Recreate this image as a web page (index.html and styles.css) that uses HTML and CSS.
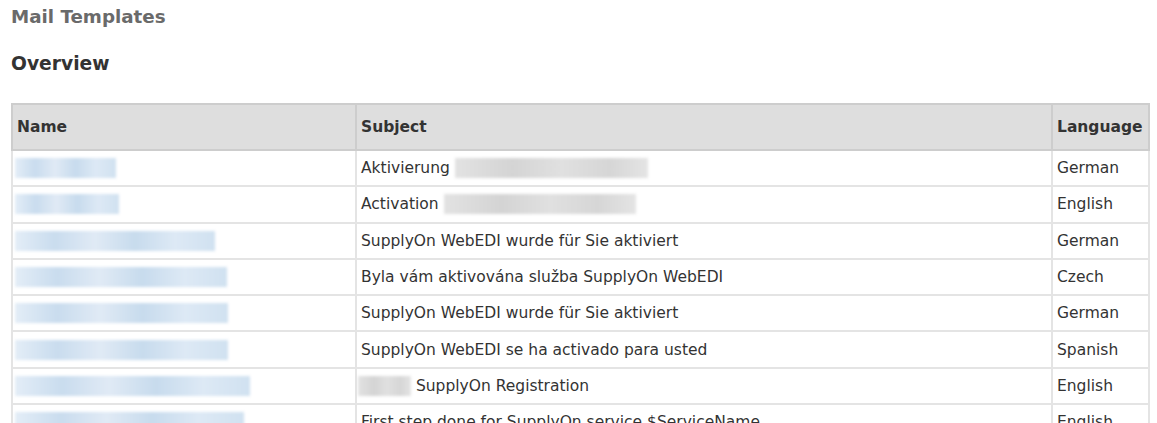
FILE: index.html
```html
<!DOCTYPE html>
<html>
<head>
<meta charset="utf-8">
<title>Mail Templates</title>
<link rel="stylesheet" href="styles.css">
</head>
<body>
<div class="page">
  <h1 class="title">Mail Templates</h1>
  <h2 class="subtitle">Overview</h2>
  <table class="grid">
    <colgroup>
      <col class="c-name">
      <col class="c-subject">
      <col class="c-lang">
    </colgroup>
    <thead>
      <tr><th>Name</th><th>Subject</th><th>Language</th></tr>
    </thead>
    <tbody>
      <tr>
        <td><span class="blur-name" style="width:101px"></span></td>
        <td>Aktivierung <span class="blur-sub" style="width:193px"></span></td>
        <td>German</td>
      </tr>
      <tr>
        <td><span class="blur-name" style="width:104px"></span></td>
        <td>Activation <span class="blur-sub" style="width:192px"></span></td>
        <td>English</td>
      </tr>
      <tr>
        <td><span class="blur-name" style="width:200px"></span></td>
        <td>SupplyOn WebEDI wurde für Sie aktiviert</td>
        <td>German</td>
      </tr>
      <tr>
        <td><span class="blur-name" style="width:212px"></span></td>
        <td>Byla vám aktivována služba SupplyOn WebEDI</td>
        <td>Czech</td>
      </tr>
      <tr>
        <td><span class="blur-name" style="width:213px"></span></td>
        <td>SupplyOn WebEDI wurde für Sie aktiviert</td>
        <td>German</td>
      </tr>
      <tr>
        <td><span class="blur-name" style="width:213px"></span></td>
        <td>SupplyOn WebEDI se ha activado para usted</td>
        <td>Spanish</td>
      </tr>
      <tr>
        <td><span class="blur-name" style="width:235px"></span></td>
        <td class="tight"><span class="blur-sub" style="width:53px"></span> SupplyOn Registration</td>
        <td>English</td>
      </tr>
      <tr>
        <td><span class="blur-name" style="width:229px"></span></td>
        <td>First step done for SupplyOn service $ServiceName</td>
        <td>English</td>
      </tr>
    </tbody>
  </table>
</div>
</body>
</html>
```
FILE: styles.css
```css
html, body {
  margin: 0;
  padding: 0;
  background: #ffffff;
}

body {
  font-family: "DejaVu Sans", Verdana, sans-serif;
  color: #333333;
}

.page {
  padding: 4px 10px 0 11px;
}

.title {
  margin: 0;
  font-size: 18.3px;
  font-weight: bold;
  color: #6a6a6a;
  line-height: 26px;
}

.subtitle {
  margin: 21px 0 0 0;
  font-size: 18.7px;
  font-weight: bold;
  color: #333333;
  line-height: 26px;
}

.grid {
  margin-top: 26px;
  width: 1137px;
  border-collapse: collapse;
  table-layout: fixed;
  font-size: 15.5px;
}

.c-name { width: 344px; }
.c-subject { width: 696px; }
.c-lang { width: 97px; }

.grid th {
  background: #dedede;
  border: 2px solid #cdcdcd;
  text-align: left;
  font-weight: bold;
  color: #333333;
  height: 44px;
  padding: 0 4px;
  vertical-align: middle;
  white-space: nowrap;
}

.grid td {
  border: 2px solid #e4e4e4;
  height: 34.3px;
  padding: 0 4px;
  vertical-align: middle;
  white-space: nowrap;
  color: #333333;
}

.grid td.tight {
  padding-left: 1px;
}

.grid tbody tr:first-child td {
  border-top-color: #cdcdcd;
}

.blur-name {
  display: inline-block;
  vertical-align: middle;
  height: 20px;
  margin-left: -2px;
  background: linear-gradient(90deg, #e3edf7 0%, #c9dcee 20%, #e0eaf5 40%, #c7dbed 60%, #dde9f5 80%, #d0e1f0 100%);
  filter: blur(1.5px);
}

.blur-sub {
  display: inline-block;
  vertical-align: middle;
  height: 20px;
  background: linear-gradient(90deg, #e2e2e2 0%, #d4d4d4 30%, #e0e0e0 55%, #d6d6d6 80%, #e4e4e4 100%);
  filter: blur(1.5px);
}
```
